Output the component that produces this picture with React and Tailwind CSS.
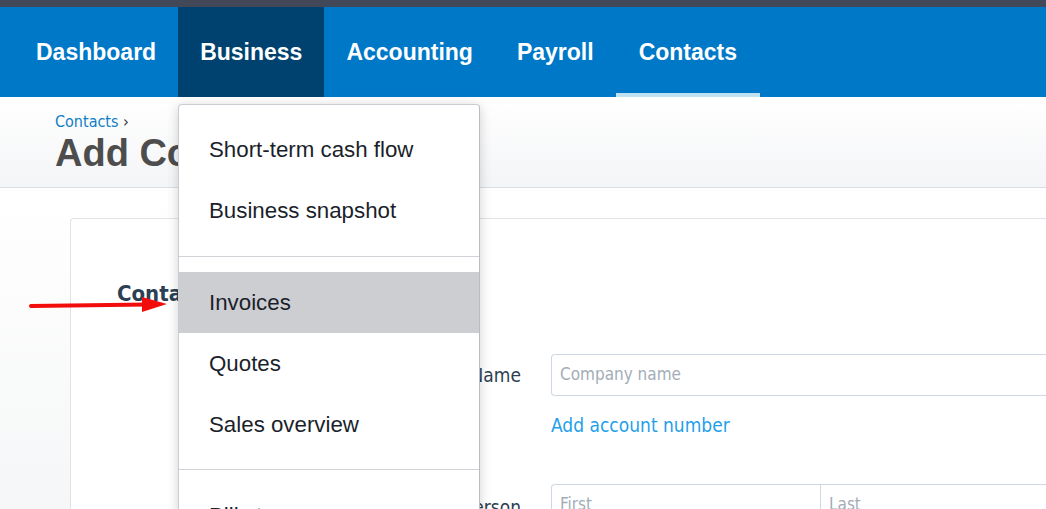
import React from 'react';

const navItems = ['Dashboard', 'Business', 'Accounting', 'Payroll', 'Contacts'];

const menuGroups = [
  ['Short-term cash flow', 'Business snapshot'],
  ['Invoices', 'Quotes', 'Sales overview'],
  ['Bills to pay'],
];

const formFont = "font-['DejaVu_Sans_Condensed','Liberation_Sans',sans-serif]";

const NavBar = () => (
  <div className="flex h-[90px] shrink-0 bg-[#0078c8] pl-[14px]">
    {navItems.map((item) => (
      <div
        key={item}
        className={`flex items-center px-[22px] text-[23px] font-bold text-white ${
          item === 'Business' ? 'bg-[#00426f]' : ''
        } ${item === 'Contacts' ? 'px-[23px] shadow-[inset_0_-4px_0_#c0e0f3]' : ''}`}
      >
        {item}
      </div>
    ))}
  </div>
);

const BusinessMenu = () => (
  <div className="absolute left-[178px] top-[104px] w-[302px] h-[440px] rounded-[4px] border border-[#c9ccd1] border-r-[#b9bdc3] bg-white shadow-[0_2px_12px_rgba(0,0,0,0.18)]">
    {menuGroups.map((group, gi) => (
      <div
        key={gi}
        className={`${gi === 0 ? 'pt-[14px] pb-[15px]' : 'pt-[15px] pb-[14px]'} ${
          gi > 0 ? 'border-t border-[#cfd2d6]' : ''
        }`}
      >
        {group.map((label) => (
          <div
            key={label}
            className={`flex h-[61px] items-center pl-[30px] text-[22.3px] text-[#1b1f2b] ${
              label === 'Invoices' ? 'bg-[#cdced2]' : ''
            }`}
          >
            {label}
          </div>
        ))}
      </div>
    ))}
  </div>
);

const RedArrow = () => (
  <svg className="absolute left-[26px] top-[292px]" width="146" height="24" viewBox="0 0 146 24">
    <line x1="5" y1="14" x2="122" y2="12.5" stroke="#f20c0c" strokeWidth="4" strokeLinecap="round" />
    <polygon points="116,5 141,12 116,20" fill="#f20c0c" />
  </svg>
);

export default function App() {
  return (
    <div className="relative flex h-[509px] w-[1046px] flex-col overflow-hidden bg-white font-['Liberation_Sans',Arial,sans-serif]">
      <div className="h-[7px] shrink-0 bg-[#424857]" />
      <NavBar />

      {/* Page header */}
      <div className="h-[91px] shrink-0 border-b border-[#dcdde0] bg-linear-to-b from-white to-[#f4f5f7] pl-[55px] pt-[15px]">
        <div className={`text-[16px] leading-[20px] text-[#0e7ec6] ${formFont}`}>
          Contacts <span className="text-[#333]">›</span>
        </div>
        <h1 className="text-[38px] font-bold leading-[42px] text-[#4d4d4d]">Add Contact</h1>
      </div>

      {/* Form area */}
      <div className={`flex-1 bg-linear-to-b from-white to-[#f5f6f7] pl-[70px] pt-[30px] ${formFont}`}>
        <div className="h-full rounded-tl-[4px] border-l border-t border-[#e1e3e6] bg-white pl-[46px] pt-[63px]">
          <h2 className="text-[22px] font-bold leading-[24px] text-[#2b3f55]">Contact details</h2>

          <div className="mt-[48px] flex items-center">
            <div className="w-[404px] text-right text-[19px] text-[#2c3e50]">Name</div>
            <div className="ml-[30px] flex h-[42px] flex-1 items-center rounded-l-[4px] border border-r-0 border-[#cfd8e2] pl-[8px] text-[17px] text-[#a3adb8]">
              Company name
            </div>
          </div>

          <div className="ml-[434px] mt-[17px] text-[19px] leading-[24px] text-[#1fa0ea]">Add account number</div>

          <div className="mt-[47px] flex items-start">
            <div className="w-[404px] pt-[9px] text-right text-[19px] text-[#2c3e50]">Contact person</div>
            <div className="ml-[30px] flex h-[42px] flex-1 rounded-l-[4px] border border-r-0 border-[#cfd8e2] text-[17px] text-[#a3adb8]">
              <div className="flex w-[269px] items-center border-r border-[#cfd8e2] pl-[8px]">First</div>
              <div className="flex flex-1 items-center pl-[8px]">Last</div>
            </div>
          </div>
        </div>
      </div>

      <RedArrow />
      <BusinessMenu />
    </div>
  );
}
